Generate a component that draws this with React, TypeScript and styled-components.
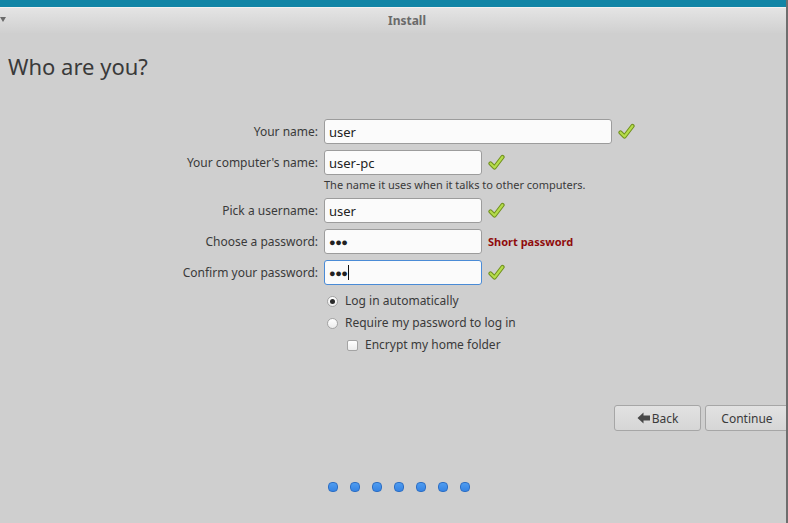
import React from 'react';
import styled, { createGlobalStyle } from 'styled-components';

const GlobalStyle = createGlobalStyle`
  html, body {
    margin: 0;
    padding: 0;
    background: #cfcfcf;
    font-family: "Noto Sans", "Open Sans", sans-serif;
  }
`;

const Window = styled.div`
  width: 786px;
  height: 523px;
  border-right: 2px solid #6e6e6e;
  background: #cfcfcf;
  display: flex;
  flex-direction: column;
  overflow: hidden;
  color: #3c3c3c;
`;

const Panel = styled.div`
  height: 7px;
  background: #1185a6;
  border-bottom: 1px solid #f2f2f2;
  flex-shrink: 0;
`;

const TitleBar = styled.div`
  position: relative;
  height: 25px;
  flex-shrink: 0;
  background: linear-gradient(to bottom, #e4e4e4, #d0d0d0);
  display: flex;
  align-items: center;
  justify-content: center;
  padding-left: 28px;
  font-size: 12px;
  font-weight: 700;
  color: #6a6a6a;
`;

const MenuArrow = styled.span`
  position: absolute;
  left: 0;
  top: 9px;
  width: 0;
  height: 0;
  border-left: 3px solid transparent;
  border-right: 3px solid transparent;
  border-top: 5px solid #6a6a6a;
`;

const Heading = styled.h1`
  margin: 18px 0 0 8px;
  font-size: 22px;
  font-weight: 400;
  color: #3a3a3a;
  line-height: 30px;
`;

const Form = styled.div`
  margin-top: 38px;
  display: grid;
  grid-template-columns: 318px 1fr;
  column-gap: 6px;
  row-gap: 6px;
  align-items: center;
`;

const Label = styled.label`
  text-align: right;
  font-size: 12px;
  color: #3a3a3a;
`;

const Entry = styled.div`
  display: flex;
  align-items: center;
  gap: 6px;
`;

const Field = styled.div<{ $w: number; $focus?: boolean }>`
  width: ${({ $w }) => $w}px;
  height: 25px;
  box-sizing: border-box;
  border: 1px solid ${({ $focus }) => ($focus ? '#4a8bd6' : '#9c9c9c')};
  border-radius: 3px;
  background: #fbfbfb;
  display: flex;
  align-items: center;
  padding-left: 4px;
  font-size: 13px;
  color: #222;
`;

const Dots = styled.span`
  font-size: 11px;
  letter-spacing: -0.5px;
  color: #222;
`;

const Caret = styled.span`
  width: 1px;
  height: 15px;
  background: #111;
  margin-left: 1px;
`;

const Warn = styled.span`
  font-size: 11px;
  font-weight: 700;
  color: #8f0c0c;
`;

const Hint = styled.div`
  grid-column: 2;
  font-size: 11px;
  color: #3a3a3a;
  margin-top: -4px;
  margin-bottom: -1px;
  line-height: 16px;
`;

const Options = styled.div`
  margin: 8px 0 0 327px;
  display: flex;
  flex-direction: column;
  gap: 6px;
`;

const Option = styled.div<{ $indent?: number }>`
  display: flex;
  align-items: center;
  gap: 7px;
  padding-left: ${({ $indent }) => $indent ?? 0}px;
  font-size: 12px;
  color: #3a3a3a;
  line-height: 16px;
`;

const Radio = styled.span<{ $on?: boolean }>`
  width: 11px;
  height: 11px;
  box-sizing: border-box;
  border-radius: 50%;
  border: 1px solid #a4a4a4;
  background: linear-gradient(to bottom, #ffffff, #ececec);
  display: flex;
  align-items: center;
  justify-content: center;
  &::after {
    content: '';
    width: 5px;
    height: 5px;
    border-radius: 50%;
    background: ${({ $on }) => ($on ? '#2a2a2a' : 'transparent')};
  }
`;

const Checkbox = styled.span`
  width: 11px;
  height: 11px;
  box-sizing: border-box;
  border: 1px solid #a4a4a4;
  border-radius: 2px;
  background: linear-gradient(to bottom, #ffffff, #ececec);
`;

const Buttons = styled.div`
  margin-top: 52px;
  display: flex;
  justify-content: flex-end;
  gap: 4px;
  margin-right: -3px;
`;

const Button = styled.button<{ $w: number }>`
  width: ${({ $w }) => $w}px;
  height: 26px;
  box-sizing: border-box;
  border: 1px solid #a6a6a6;
  border-radius: 3px;
  background: linear-gradient(to bottom, #e2e2e2, #d6d6d6);
  font-family: inherit;
  font-size: 12px;
  color: #3a3a3a;
  display: flex;
  align-items: center;
  justify-content: center;
  gap: 1px;
  padding: 0;
`;

const Progress = styled.div`
  margin-top: 51px;
  margin-left: 328px;
  display: flex;
  gap: 12px;
`;

const Dot = styled.span`
  width: 10px;
  height: 10px;
  box-sizing: border-box;
  border-radius: 4px;
  border: 1px solid #2e6fc4;
  background: linear-gradient(to bottom, #4f9cf0, #3684e4);
`;

const Check = () => (
  <svg width="17" height="17" viewBox="0 0 17 17">
    <path d="M2.5 9.5 L6.5 13.5 L14.5 3" fill="none" stroke="#6f8f1c" strokeWidth="4.2" strokeLinecap="round" strokeLinejoin="round" />
    <path d="M2.5 9.5 L6.5 13.5 L14.5 3" fill="none" stroke="#b4dc4a" strokeWidth="2.2" strokeLinecap="round" strokeLinejoin="round" />
  </svg>
);

const BackArrow = () => (
  <svg width="14" height="12" viewBox="0 0 14 12">
    <path d="M0.5 6 L6.5 0.5 L6.5 3.5 L13 3.5 L13 8.5 L6.5 8.5 L6.5 11.5 Z" fill="#484848" />
  </svg>
);

export default function App() {
  return (
    <>
      <GlobalStyle />
      <Window>
        <Panel />
        <TitleBar>
          <MenuArrow />
          Install
        </TitleBar>
        <Heading>Who are you?</Heading>
        <Form>
          <Label>Your name:</Label>
          <Entry>
            <Field $w={288}>user</Field>
            <Check />
          </Entry>

          <Label>Your computer's name:</Label>
          <Entry>
            <Field $w={158}>user-pc</Field>
            <Check />
          </Entry>
          <Hint>The name it uses when it talks to other computers.</Hint>

          <Label>Pick a username:</Label>
          <Entry>
            <Field $w={158}>user</Field>
            <Check />
          </Entry>

          <Label>Choose a password:</Label>
          <Entry>
            <Field $w={158}><Dots>●●●</Dots></Field>
            <Warn>Short password</Warn>
          </Entry>

          <Label>Confirm your password:</Label>
          <Entry>
            <Field $w={158} $focus><Dots>●●●</Dots><Caret /></Field>
            <Check />
          </Entry>
        </Form>
        <Options>
          <Option><Radio $on />Log in automatically</Option>
          <Option><Radio />Require my password to log in</Option>
          <Option $indent={20}><Checkbox />Encrypt my home folder</Option>
        </Options>
        <Buttons>
          <Button $w={87}><BackArrow />Back</Button>
          <Button $w={84}>Continue</Button>
        </Buttons>
        <Progress>
          {Array.from({ length: 7 }).map((_, i) => (
            <Dot key={i} />
          ))}
        </Progress>
      </Window>
    </>
  );
}
